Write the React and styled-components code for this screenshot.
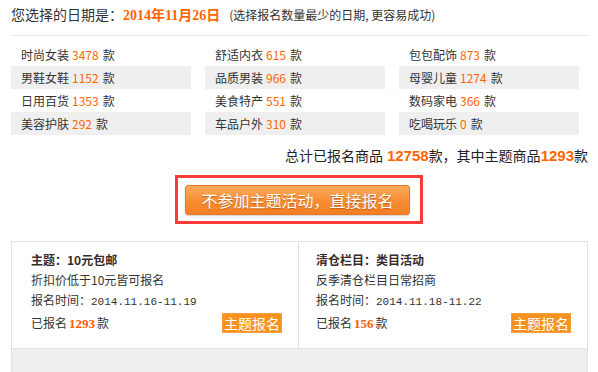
import React from "react";
import styled, { createGlobalStyle } from "styled-components";

const Global = createGlobalStyle`
  html, body { margin: 0; padding: 0; background: #fff; }
  body {
    font-family: "Noto Sans CJK SC", "Liberation Sans", sans-serif;
    font-size: 12px;
    color: #333;
  }
`;

const Page = styled.div`
  width: 598px;
  height: 372px;
  overflow: hidden;
  box-sizing: border-box;
  padding: 0 10px 0 11px;
`;

const Header = styled.div`
  padding: 4px 0 9px;
  line-height: 20px;
  font-size: 14px;
  color: #333;
  border-bottom: 1px solid #e6e6e6;
  white-space: nowrap;
`;

const DateText = styled.span`
  color: #ff6600;
  font-weight: bold;
  font-family: "Liberation Serif", "Noto Sans CJK SC", serif;
  font-size: 14px;
`;

const Hint = styled.span`
  font-size: 12px;
  color: #333;
  margin-left: 9px;
`;

const Grid = styled.div`
  margin-top: 7px;
  display: grid;
  grid-template-columns: 180px 180px 180px;
  column-gap: 14px;
  grid-auto-rows: 23px;
`;

const Cell = styled.div`
  background: ${(p) => (p.$shade ? "#efefef" : "transparent")};
  padding-left: 10px;
  line-height: 23px;
  font-size: 12px;
  color: #333;
  white-space: nowrap;
`;

const Num = styled.span`
  color: #ff6600;
  margin: 0 4px 0 3px;
`;

const Total = styled.div`
  margin-top: 10px;
  text-align: right;
  line-height: 20px;
  font-size: 14px;
  color: #222;
  white-space: nowrap;
`;

const TotalNum = styled.b`
  color: #ff6600;
  font-family: "Liberation Sans", Arial, sans-serif;
  font-size: 15px;
  margin-left: ${(p) => p.$ml || 0}px;
`;

const Center = styled.div`
  margin-top: 9px;
  display: flex;
  justify-content: center;
  padding-right: 1px;
`;

const RedBox = styled.div`
  border: 3px solid #fb3b3b;
  padding: 7px 10px 6px 7px;
  display: flex;
`;

const MainButton = styled.button`
  width: 225px;
  height: 30px;
  border: 1px solid #e9782a;
  border-radius: 3px;
  background: linear-gradient(to bottom, #fcab5c 0%, #f88f37 50%, #f47e22 100%);
  color: #fff;
  font-family: "Noto Sans CJK SC", sans-serif;
  font-size: 16px;
  line-height: 26px;
  padding: 0;
  text-shadow: 0 1px 1px rgba(120, 50, 0, 0.45);
  box-shadow: 0 1px 2px rgba(0, 0, 0, 0.2);
  cursor: pointer;
`;

const Panel = styled.div`
  margin-top: 17px;
  border: 1px solid #e2e2e2;
  background: #efefef;
  height: 160px;
`;

const CardRow = styled.div`
  display: grid;
  grid-template-columns: 287px 1fr;
  background: #fff;
  border-bottom: 1px solid #e2e2e2;
`;

const Card = styled.div`
  padding: 8px 16px 14px ${(p) => p.$pl}px;
  border-right: ${(p) => (p.$divider ? "1px solid #e2e2e2" : "none")};
  display: flex;
  flex-direction: column;
`;

const CardTitle = styled.div`
  font-weight: bold;
  font-size: 12px;
  line-height: 20px;
  color: #3a2a2a;
`;

const CardLine = styled.div`
  font-size: 12px;
  line-height: 20px;
  color: #333;
`;

const Mono = styled.span`
  font-family: "Liberation Mono", "DejaVu Sans Mono", monospace;
  font-size: 11px;
`;

const CardFoot = styled.div`
  display: flex;
  align-items: center;
  justify-content: space-between;
  height: 22px;
`;

const Count = styled.b`
  color: #ff5a00;
  font-family: "Liberation Serif", serif;
  font-size: 13px;
  margin: 0 2px;
`;

const SmallButton = styled.button`
  width: 60px;
  height: 20px;
  padding: 0;
  border: 1px solid #f5a040;
  background: #f8921f;
  color: #fff;
  font-family: "Noto Sans CJK SC", sans-serif;
  font-size: 14px;
  line-height: 18px;
  cursor: pointer;
`;

const cats = [
  ["时尚女装", 3478],
  ["舒适内衣", 615],
  ["包包配饰", 873],
  ["男鞋女鞋", 1152],
  ["品质男装", 966],
  ["母婴儿童", 1274],
  ["日用百货", 1353],
  ["美食特产", 551],
  ["数码家电", 366],
  ["美容护肤", 292],
  ["车品户外", 310],
  ["吃喝玩乐", 0],
];

const cards = [
  {
    title: "主题：10元包邮",
    desc: "折扣价低于10元皆可报名",
    time: "2014.11.16-11.19",
    count: 1293,
    pl: 19,
  },
  {
    title: "清仓栏目：类目活动",
    desc: "反季清仓栏目日常招商",
    time: "2014.11.18-11.22",
    count: 156,
    pl: 17,
  },
];

export default function App() {
  return (
    <>
      <Global />
      <Page>
        <Header>
          您选择的日期是：<DateText>2014年11月26日</DateText>
          <Hint>(选择报名数量最少的日期, 更容易成功)</Hint>
        </Header>
        <Grid>
          {cats.map(([name, n], i) => (
            <Cell key={name} $shade={Math.floor(i / 3) % 2 === 1}>
              {name}
              <Num>{n}</Num>款
            </Cell>
          ))}
        </Grid>
        <Total>
          总计已报名商品<TotalNum $ml={4}>12758</TotalNum>款，其中主题商品
          <TotalNum>1293</TotalNum>款
        </Total>
        <Center>
          <RedBox>
            <MainButton>不参加主题活动，直接报名</MainButton>
          </RedBox>
        </Center>
        <Panel>
          <CardRow>
            {cards.map((c, i) => (
              <Card key={c.title} $pl={c.pl} $divider={i === 0}>
                <CardTitle>{c.title}</CardTitle>
                <CardLine>{c.desc}</CardLine>
                <CardLine>
                  报名时间：<Mono>{c.time}</Mono>
                </CardLine>
                <CardFoot>
                  <CardLine>
                    已报名<Count>{c.count}</Count>款
                  </CardLine>
                  <SmallButton>主题报名</SmallButton>
                </CardFoot>
              </Card>
            ))}
          </CardRow>
        </Panel>
      </Page>
    </>
  );
}
